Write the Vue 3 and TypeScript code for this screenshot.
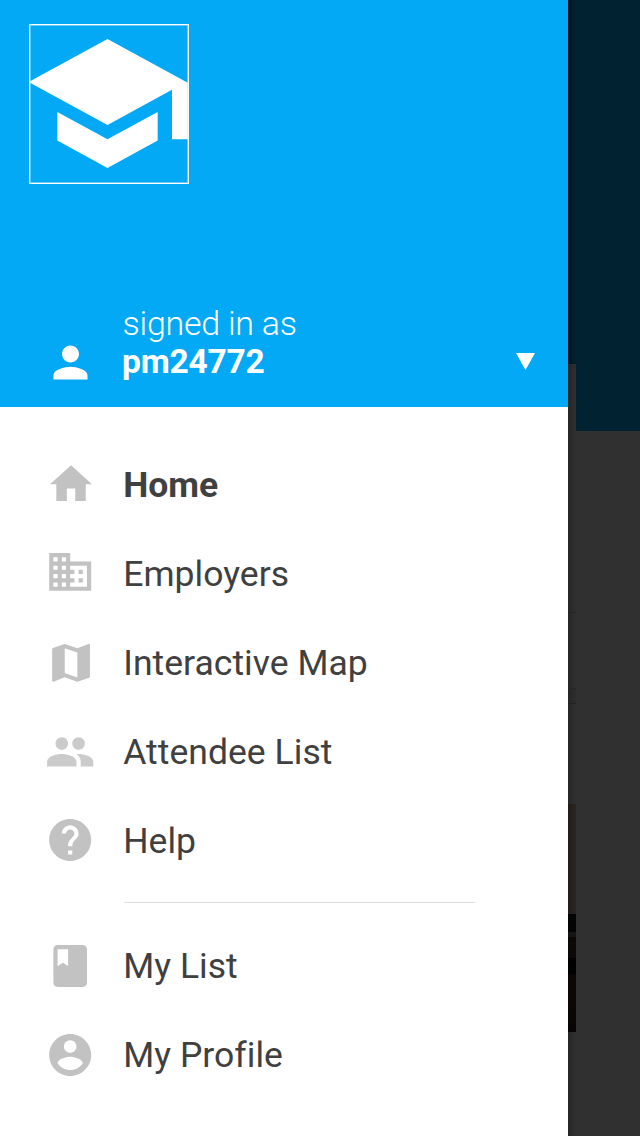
<script setup lang="ts">
interface Item {
  label: string
  path: string
  dx?: number
  dy?: number
  active?: boolean
  light?: boolean
}

const primary: Item[] = [
  { label: 'Home', active: true, dx: 0.4, dy: 0, path: 'M10 20v-6h4v6h5v-8h3L12 3 2 12h3v8z' },
  { label: 'Employers', dy: -0.6, path: 'M12 7V3H2v18h20V7H12zM6 19H4v-2h2v2zm0-4H4v-2h2v2zm0-4H4V9h2v2zm0-4H4V5h2v2zm4 12H8v-2h2v2zm0-4H8v-2h2v2zm0-4H8V9h2v2zm0-4H8V5h2v2zm10 12h-8v-2h2v-2h-2v-2h2v-2h-2V9h8v10zm-2-8h-2v2h2v-2zm0 4h-2v2h2v-2z' },
  { label: 'Interactive Map', dx: 0.4, dy: 0.3, path: 'M20.5 3l-.16.03L15 5.1 9 3 3.36 4.9c-.21.07-.36.25-.36.48V20.5c0 .28.22.5.5.5l.16-.03L9 18.9l6 2.1 5.64-1.9c.21-.07.36-.25.36-.48V3.5c0-.28-.22-.5-.5-.5zM15 19l-6-2.11V5l6 2.11V19z' },
  { label: 'Attendee List', light: true, dy: 0.3, path: 'M16 11c1.66 0 2.99-1.34 2.99-3S17.66 5 16 5c-1.66 0-3 1.34-3 3s1.34 3 3 3zm-8 0c1.66 0 2.99-1.34 2.99-3S9.66 5 8 5C6.34 5 5 6.34 5 8s1.34 3 3 3zm0 2c-2.33 0-7 1.17-7 3.5V19h14v-2.5c0-2.33-4.67-3.5-7-3.5zm8 0c-.29 0-.62.02-.97.05 1.16.84 1.97 1.97 1.97 3.45V19h6v-2.5c0-2.33-4.67-3.5-7-3.5z' },
  { label: 'Help', dy: -0.15, path: 'M12 2C6.48 2 2 6.48 2 12s4.48 10 10 10 10-4.48 10-10S17.52 2 12 2zm1 17h-2v-2h2v2zm2.07-7.75l-.9.92C13.45 12.9 13 13.5 13 15h-2v-.5c0-1.1.45-2.1 1.17-2.83l1.24-1.26c.37-.36.59-.86.59-1.41 0-1.1-.9-2-2-2s-2 .9-2 2H8c0-2.21 1.79-4 4-4s4 1.79 4 4c0 .88-.36 1.68-.93 2.25z' },
]

const personal: Item[] = [
  { label: 'My List', dy: 0.35, path: 'M18 2H6c-1.1 0-2 .9-2 2v16c0 1.1.9 2 2 2h12c1.1 0 2-.9 2-2V4c0-1.1-.9-2-2-2zM6 4h5v8l-2.5-1.5L6 12V4z' },
  { label: 'My Profile', dy: 0.35, path: 'M12 2C6.48 2 2 6.48 2 12s4.48 10 10 10 10-4.48 10-10S17.52 2 12 2zm0 3c1.66 0 3 1.34 3 3s-1.34 3-3 3-3-1.34-3-3 1.34-3 3-3zm0 14.2c-2.5 0-4.71-1.28-6-3.22.03-1.99 4-3.08 6-3.08 1.99 0 5.97 1.09 6 3.08-1.29 1.94-3.5 3.22-6 3.22z' },
]

const groups = [primary, personal]
</script>

<template>
  <div class="screen">
    <aside class="drawer">
      <header class="head">
        <div class="logo">
          <svg width="158" height="158" viewBox="0 0 158 158">
            <g transform="translate(-8.5 -7.5) scale(7.1667)" fill="#fff">
              <path d="M5 13.18v4L12 21l7-3.82v-4L12 17l-7-3.82zM12 3L1 9l11 6 9-4.91V17h2.2V9.1L12 3z" />
            </g>
          </svg>
        </div>
        <div class="account">
          <svg class="person" width="51" height="51" viewBox="0 0 24 24">
            <path d="M12 12c2.21 0 4-1.79 4-4s-1.79-4-4-4-4 1.79-4 4 1.79 4 4 4zm0 2c-2.67 0-8 1.34-8 4v2h16v-2c0-2.66-5.33-4-8-4z" />
          </svg>
          <div class="who">
            <span class="signed">signed in as</span>
            <strong class="user">pm24772</strong>
          </div>
          <svg class="caret" width="19" height="17" viewBox="0 0 19 17"><path d="M0 0h19L9.5 17z" /></svg>
        </div>
      </header>
      <nav class="nav">
        <ul v-for="(group, g) in groups" :key="g" class="group">
          <li v-for="item in group" :key="item.label" class="item" :class="{ active: item.active, light: item.light }">
            <svg class="icon" viewBox="0 0 24 24">
              <path :d="item.path" :transform="`translate(${item.dx ?? 0} ${item.dy ?? 0})`" />
            </svg>
            <span class="label">{{ item.label }}</span>
          </li>
        </ul>
      </nav>
    </aside>
    <div class="behind">
      <div class="cards">
        <div class="card first"><div class="line"></div></div>
        <div class="card second">
          <div class="wall"></div>
          <div class="shelf"></div>
        </div>
      </div>
      <div class="backdrop">
        <div class="banner"></div>
      </div>
    </div>
  </div>
</template>

<style>
body {
  margin: 0;
}
</style>

<style scoped>
.screen {
  display: flex;
  width: 640px;
  height: 1136px;
  overflow: hidden;
  font-family: Roboto, "Liberation Sans", sans-serif;
  background: #303030;
}
.drawer {
  width: 568px;
  flex: none;
  display: flex;
  flex-direction: column;
  background: #fff;
}
.head {
  height: 407px;
  box-sizing: border-box;
  padding: 24px 33px 27px 29px;
  display: flex;
  flex-direction: column;
  justify-content: space-between;
  background: #03a9f4;
  color: #fff;
  fill: #fff;
}
.logo {
  width: 158px;
  height: 158px;
  border: 1px solid #fff;
  box-shadow: inset 0 0 0 1px rgba(255, 255, 255, 0.4);
}
.logo svg {
  display: block;
  overflow: hidden;
  filter: blur(0.7px);
}
.account {
  display: flex;
  height: 76px;
}
.person {
  margin: 33px 0 0 16.3px;
  flex: none;
}
.who {
  flex: 1;
  margin-left: 26.3px;
  display: flex;
  flex-direction: column;
  line-height: 38px;
  font-size: 34px;
}
.signed {
  font-weight: 300;
  letter-spacing: -0.27px;
}
.user {
  margin-left: -0.6px;
  font-size: 33.5px;
  line-height: 40px;
  font-weight: 700;
  letter-spacing: -0.2px;
}
.caret {
  margin-top: 49px;
}
.nav {
  padding-top: 33px;
}
.group {
  margin: 0;
  padding: 0;
  list-style: none;
}
.group + .group::before {
  content: "";
  display: block;
  width: 351px;
  height: 1px;
  margin: 17px 0 18px 124px;
  background: #dedede;
}
.item {
  display: flex;
  align-items: center;
  height: 89px;
  padding-left: 44.8px;
  font-size: 35.5px;
  color: #404040;
}
.icon {
  width: 50.4px;
  height: 50.4px;
  flex: none;
  fill: #c2c2c2;
}
.light .icon {
  fill: #cbcbcb;
}
.label {
  margin-left: 28px;
  padding-top: 2px;
  line-height: 87px;
  letter-spacing: 0.04px;
  white-space: nowrap;
}
.active .label {
  font-weight: 700;
  letter-spacing: -0.05px;
}
.behind {
  flex: 1;
  display: flex;
  background: linear-gradient(#002231 0 431px, #303030 431px);
}
.cards {
  width: 8px;
  padding-top: 364px;
  background: linear-gradient(90deg, rgba(0, 0, 0, 0.3), transparent);
}
.card {
  background: linear-gradient(90deg, #262626, #303030);
}
.first {
  height: 324px;
  border-bottom: 1px solid #262626;
}
.line {
  height: 248px;
  border-bottom: 1px solid #232323;
}
.second {
  height: 447px;
}
.second::before {
  content: "";
  display: block;
  height: 14px;
  margin-bottom: 100px;
  background: linear-gradient(90deg, #252525, #2d2d2d);
  border-bottom: 1px solid #222;
}
.wall {
  height: 110px;
  background: linear-gradient(90deg, #221d1a, #2b2522);
}
.shelf {
  height: 118px;
  background: linear-gradient(#050404 0 18px, #171514 18px 23px, #0b0807 23px 44px, #000 44px 60px, #0c0706 60px 90px, #060404);
}
.backdrop {
  flex: 1;
}
.banner {
  height: 431px;
  background: #002231;
}
</style>
